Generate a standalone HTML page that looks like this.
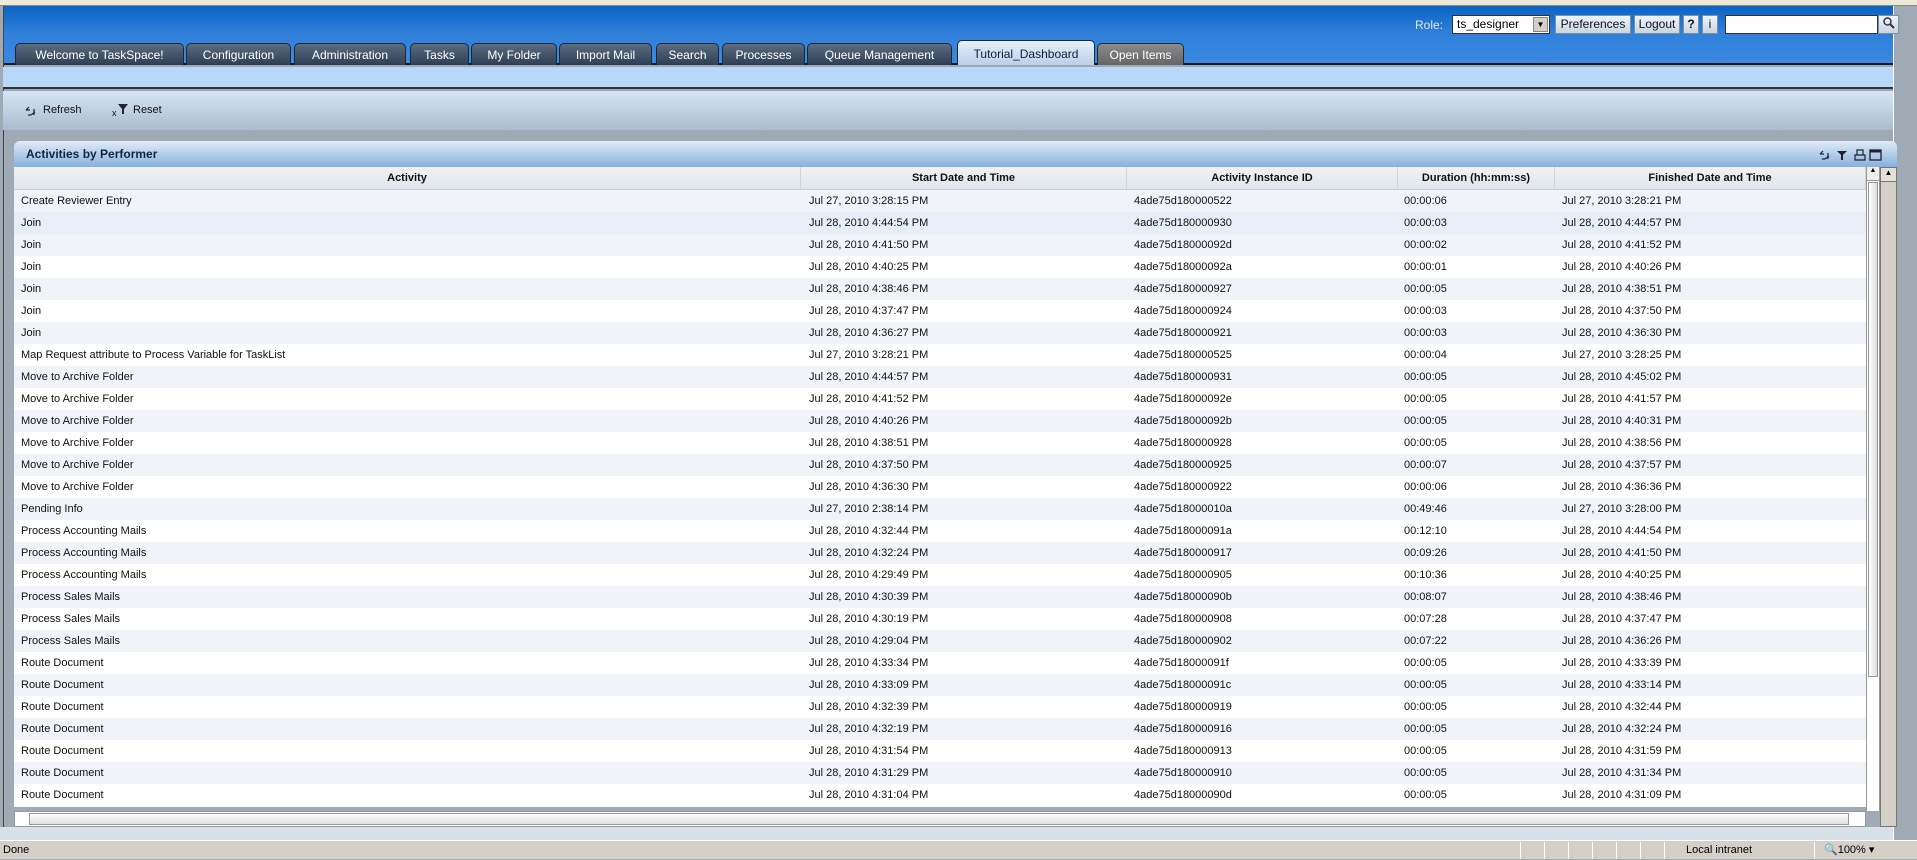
<!DOCTYPE html>
<html><head><meta charset="utf-8"><style>
*{margin:0;padding:0;box-sizing:border-box}
body{width:1917px;height:859px;overflow:hidden;background:#a0aab4;font-family:"Liberation Sans",sans-serif;position:relative}
.abs{position:absolute}
#top{left:0;top:0;width:1917px;height:6px;background:#ece9d8;border-bottom:1px solid #888}
#hdr{left:3px;top:6px;width:1890px;height:59px;background:linear-gradient(#0a62c4,#2f7fd8 45%,#3a8ae2);border-bottom:2px solid #1a1a1a}
#rside{left:1893px;top:6px;width:24px;height:834px;background:#a0aab4;border-left:1px solid #fff}
.tab{position:absolute;top:43px;height:22px;background:linear-gradient(#5c6c80,#2e3e54);color:#fff;font-size:12px;font-weight:normal;line-height:22px;text-align:center;border-radius:5px 5px 0 0;border:1px solid #1c2838;border-bottom:none;white-space:nowrap;overflow:hidden}
.tab.act{top:40px;height:25px;background:linear-gradient(#e8f0f8,#b8d0ea);color:#102030;line-height:26px}
.tab.oi{background:linear-gradient(#8a8a8a,#666);}
#band{left:3px;top:67px;width:1890px;height:22px;background:#b8d8fa;border-bottom:2px solid #333}
#tool{left:3px;top:91px;width:1890px;height:39px;background:linear-gradient(#d6e6f6,#a9bccf);font-size:11px;color:#111}
#lf{left:0;top:6px;width:4px;height:834px;background:#a0aab4;border-right:1px solid #444}
#ph{left:14px;top:141px;width:1883px;height:26px;background:linear-gradient(#e0ecf8,#86b0de);border-radius:6px 6px 0 0;font-size:12px;font-weight:bold;color:#12283a;line-height:26px;padding-left:12px}
#tbl{left:14px;top:167px;width:1852px;height:640px;background:#fff;overflow:hidden}
.hd{position:absolute;top:0;height:23px;background:linear-gradient(#f2f2f2,#dfe5ea);border-right:1px solid #cfd4d8;border-bottom:1px solid #c6ced6;font-size:11px;font-weight:bold;text-align:center;line-height:23px;color:#111}
.row{position:absolute;left:0;width:1852px;height:22px;font-size:11px;color:#111;line-height:22px}
.row span{position:absolute;top:0;white-space:nowrap}
.btn{position:absolute;top:15px;height:19px;background:linear-gradient(#f0f4f8,#c8d4e0);border:1px solid #7890a8;font-size:12px;line-height:17px;text-align:center;color:#112}
#status{left:0;top:840px;width:1917px;height:19px;background:#d4d0c8;border-top:1px solid #fff;font-size:11px;line-height:19px}
.sd{position:absolute;top:1px;width:1px;height:17px;background:#999;border-right:1px solid #fff}
</style></head><body>
<div id="top" class="abs"></div>
<div id="hdr" class="abs"></div>
<div id="lf" class="abs"></div>
<div id="rside" class="abs"></div>
<div class="abs" style="left:1415px;top:18px;color:#dde8f8;font-size:12px">Role:</div>
<div class="abs" style="left:1452px;top:15px;width:98px;height:19px;background:#fff;border:1px solid #333;font-size:12px;line-height:17px;padding-left:4px">ts_designer<div class="abs" style="right:1px;top:1px;width:15px;height:15px;background:#d4d0c8;border:1px solid #888;font-size:8px;text-align:center;line-height:14px">▼</div></div>
<div class="btn" style="left:1555px;width:76px">Preferences</div>
<div class="btn" style="left:1634px;width:46px">Logout</div>
<div class="btn" style="left:1683px;width:16px;font-weight:bold">?</div>
<div class="btn" style="left:1702px;width:16px">i</div>
<div class="abs" style="left:1725px;top:15px;width:153px;height:19px;background:#fff;border:1px solid #333"></div>
<div class="btn" style="left:1878px;width:21px"><svg width="14" height="14" viewBox="0 0 14 14"><circle cx="5.5" cy="5.5" r="3.5" fill="none" stroke="#334" stroke-width="1.5"/><path d="M8 8l4 4" stroke="#334" stroke-width="2"/></svg></div>

<div class="tab" style="left:15px;width:169px">Welcome to TaskSpace!</div>
<div class="tab" style="left:186px;width:105px">Configuration</div>
<div class="tab" style="left:294px;width:112px">Administration</div>
<div class="tab" style="left:410px;width:59px">Tasks</div>
<div class="tab" style="left:471px;width:86px">My Folder</div>
<div class="tab" style="left:559px;width:93px">Import Mail</div>
<div class="tab" style="left:656px;width:63px">Search</div>
<div class="tab" style="left:722px;width:83px">Processes</div>
<div class="tab" style="left:807px;width:145px">Queue Management</div>
<div class="tab act" style="left:957px;width:138px">Tutorial_Dashboard</div>
<div class="tab oi" style="left:1097px;width:87px">Open Items</div>

<div id="band" class="abs"></div>
<div id="tool" class="abs">
<svg class="abs" style="left:22px;top:14px" width="12" height="12" viewBox="0 0 12 12"><path d="M1 5l3-3M1 5h4M6 10l4-3M6 10h-3M9 4v6" stroke="#223" stroke-width="1.2" fill="none"/></svg>
<span class="abs" style="left:40px;top:13px">Refresh</span>
<span class="abs" style="left:109px;top:17px;font-size:9px">x</span>
<svg class="abs" style="left:115px;top:13px" width="10" height="10" viewBox="0 0 10 10"><path d="M0 0h10L6 5v5H4V5z" fill="#223"/></svg>
<span class="abs" style="left:130px;top:13px">Reset</span></div>
<div id="ph" class="abs">Activities by Performer
<svg class="abs" style="right:14px;top:7px" width="64" height="14" viewBox="0 0 64 14"><path d="M1 6l3-3M1 6h4M6 11l4-3M6 11h-3M9 5v6" stroke="#223" stroke-width="1.2" fill="none"/><path d="M18 3h10l-4 4v5h-2V7z" fill="#223"/><path d="M36 7h10v5H36zM38 7V2h6v5" stroke="#223" stroke-width="1.2" fill="none"/><rect x="51" y="2" width="11" height="10" fill="none" stroke="#223" stroke-width="1.3"/><rect x="51" y="2" width="11" height="2.5" fill="#223"/></svg></div>
<div id="tbl" class="abs">
<div class="hd" style="left:0;width:787px">Activity</div>
<div class="hd" style="left:787px;width:326px">Start Date and Time</div>
<div class="hd" style="left:1113px;width:271px">Activity Instance ID</div>
<div class="hd" style="left:1384px;width:157px">Duration (hh:mm:ss)</div>
<div class="hd" style="left:1541px;width:311px">Finished Date and Time</div>
<div id="rows"></div>
</div>
<div class="abs" style="left:1866px;top:167px;width:14px;height:644px;background:#fff;border-left:1px solid #999;border-right:1px solid #999"><div style="height:14px;background:#eee;border-bottom:1px solid #999;font-size:7px;text-align:center">▲</div><div style="margin:1px;height:495px;background:linear-gradient(90deg,#fff,#ddd);border:1px solid #999"></div></div>
<div class="abs" style="left:1880px;top:167px;width:17px;height:660px;background:#d4d0c8;border:1px solid #777"><div style="height:14px;background:#e4e0d8;border-bottom:1px solid #777;font-size:8px;text-align:center">▲</div></div>
<div class="abs" style="left:14px;top:811px;width:1852px;height:16px;background:#fff;border:1px solid #999"><div style="position:absolute;left:14px;top:1px;width:1820px;height:12px;background:linear-gradient(#fff,#e0e0e0);border:1px solid #999"></div></div>
<div class="abs" style="left:0;top:827px;width:1893px;height:13px;background:#d8e0e8"></div>
<div id="status" class="abs"><span style="padding-left:3px">Done</span>
<div class="sd" style="left:1520px"></div><div class="sd" style="left:1544px"></div><div class="sd" style="left:1568px"></div><div class="sd" style="left:1592px"></div><div class="sd" style="left:1616px"></div><div class="sd" style="left:1640px"></div><div class="sd" style="left:1664px"></div><div class="sd" style="left:1814px"></div>
<span class="abs" style="left:1686px;top:0">Local intranet</span><span class="abs" style="left:1824px;top:0">🔍100% ▾</span></div>
<script>
var d=[["Create Reviewer Entry","Jul 27, 2010 3:28:15 PM","4ade75d180000522","00:00:06","Jul 27, 2010 3:28:21 PM"],
["Join","Jul 28, 2010 4:44:54 PM","4ade75d180000930","00:00:03","Jul 28, 2010 4:44:57 PM"],
["Join","Jul 28, 2010 4:41:50 PM","4ade75d18000092d","00:00:02","Jul 28, 2010 4:41:52 PM"],
["Join","Jul 28, 2010 4:40:25 PM","4ade75d18000092a","00:00:01","Jul 28, 2010 4:40:26 PM"],
["Join","Jul 28, 2010 4:38:46 PM","4ade75d180000927","00:00:05","Jul 28, 2010 4:38:51 PM"],
["Join","Jul 28, 2010 4:37:47 PM","4ade75d180000924","00:00:03","Jul 28, 2010 4:37:50 PM"],
["Join","Jul 28, 2010 4:36:27 PM","4ade75d180000921","00:00:03","Jul 28, 2010 4:36:30 PM"],
["Map Request attribute to Process Variable for TaskList","Jul 27, 2010 3:28:21 PM","4ade75d180000525","00:00:04","Jul 27, 2010 3:28:25 PM"],
["Move to Archive Folder","Jul 28, 2010 4:44:57 PM","4ade75d180000931","00:00:05","Jul 28, 2010 4:45:02 PM"],
["Move to Archive Folder","Jul 28, 2010 4:41:52 PM","4ade75d18000092e","00:00:05","Jul 28, 2010 4:41:57 PM"],
["Move to Archive Folder","Jul 28, 2010 4:40:26 PM","4ade75d18000092b","00:00:05","Jul 28, 2010 4:40:31 PM"],
["Move to Archive Folder","Jul 28, 2010 4:38:51 PM","4ade75d180000928","00:00:05","Jul 28, 2010 4:38:56 PM"],
["Move to Archive Folder","Jul 28, 2010 4:37:50 PM","4ade75d180000925","00:00:07","Jul 28, 2010 4:37:57 PM"],
["Move to Archive Folder","Jul 28, 2010 4:36:30 PM","4ade75d180000922","00:00:06","Jul 28, 2010 4:36:36 PM"],
["Pending Info","Jul 27, 2010 2:38:14 PM","4ade75d18000010a","00:49:46","Jul 27, 2010 3:28:00 PM"],
["Process Accounting Mails","Jul 28, 2010 4:32:44 PM","4ade75d18000091a","00:12:10","Jul 28, 2010 4:44:54 PM"],
["Process Accounting Mails","Jul 28, 2010 4:32:24 PM","4ade75d180000917","00:09:26","Jul 28, 2010 4:41:50 PM"],
["Process Accounting Mails","Jul 28, 2010 4:29:49 PM","4ade75d180000905","00:10:36","Jul 28, 2010 4:40:25 PM"],
["Process Sales Mails","Jul 28, 2010 4:30:39 PM","4ade75d18000090b","00:08:07","Jul 28, 2010 4:38:46 PM"],
["Process Sales Mails","Jul 28, 2010 4:30:19 PM","4ade75d180000908","00:07:28","Jul 28, 2010 4:37:47 PM"],
["Process Sales Mails","Jul 28, 2010 4:29:04 PM","4ade75d180000902","00:07:22","Jul 28, 2010 4:36:26 PM"],
["Route Document","Jul 28, 2010 4:33:34 PM","4ade75d18000091f","00:00:05","Jul 28, 2010 4:33:39 PM"],
["Route Document","Jul 28, 2010 4:33:09 PM","4ade75d18000091c","00:00:05","Jul 28, 2010 4:33:14 PM"],
["Route Document","Jul 28, 2010 4:32:39 PM","4ade75d180000919","00:00:05","Jul 28, 2010 4:32:44 PM"],
["Route Document","Jul 28, 2010 4:32:19 PM","4ade75d180000916","00:00:05","Jul 28, 2010 4:32:24 PM"],
["Route Document","Jul 28, 2010 4:31:54 PM","4ade75d180000913","00:00:05","Jul 28, 2010 4:31:59 PM"],
["Route Document","Jul 28, 2010 4:31:29 PM","4ade75d180000910","00:00:05","Jul 28, 2010 4:31:34 PM"],
["Route Document","Jul 28, 2010 4:31:04 PM","4ade75d18000090d","00:00:05","Jul 28, 2010 4:31:09 PM"]];
var xs=[7,795,1120,1390,1548],h="";
d.forEach(function(r,i){var bg=i==1?"#e8eef8":(i%2==0?"#f0f4f8":"#fff");
h+='<div class="row" style="top:'+(23+i*22)+'px;background:'+bg+'">';
r.forEach(function(c,j){h+='<span style="left:'+xs[j]+'px">'+c+'</span>'});h+='</div>';});
document.getElementById("rows").innerHTML=h;
</script>
</body></html>
